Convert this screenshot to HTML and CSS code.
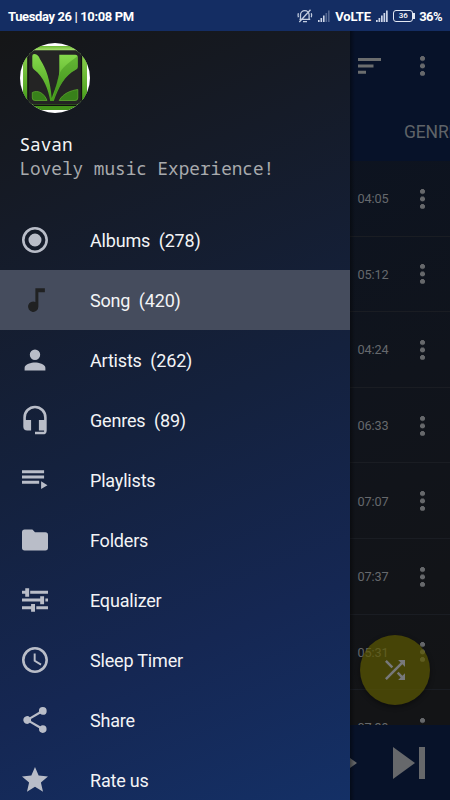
FILE: index.html
```html
<!DOCTYPE html>
<html lang="en">
<head>
<meta charset="utf-8">
<title>Savan</title>
<link rel="stylesheet" href="styles.css">
</head>
<body>
<header class="status">
  <span class="clock">Tuesday 26 | 10:08 PM</span>
  <div class="indicators">
    <svg class="bell" width="16" height="14" viewBox="0 0 16 14" fill="none" stroke="#c3cde0" stroke-width="1.3"><path d="M3.500 10V6a4.300 4.300 0 0 1 8.600 0v4M2.500 10.300h10.700M6 12.700h4M13.500 .8 2.300 13M1.400 4.300a6 6 0 0 0 0 4M14.300 4.300a6 6 0 0 1 0 4"/></svg>
    <svg class="signal" width="12" height="12" viewBox="0 0 12 12" fill="#ccd5e8"><path d="M0 10h1.600v2H0zM2.500 8h1.600v4H2.500zM5 5.500h1.600V12H5z"/><path opacity=".35" d="M7.500 3h1.600v9H7.500zM10 .5h1.600V12H10z"/></svg>
    <span class="volte">VoLTE</span>
    <svg class="signal2" width="12" height="12" viewBox="0 0 12 12" fill="#ccd5e8"><path d="M0 10h1.700v2H0zM2.500 8h1.700v4H2.500zM5 5.500h1.700V12H5zM7.500 3h1.700v9H7.500zM10 .5h1.700V12H10z"/></svg>
    <span class="battery">36</span>
    <span class="percent">36%</span>
  </div>
</header>
<div class="screen">
  <nav class="drawer">
    <div class="profile">
      <svg class="avatar" width="70" height="70" viewBox="0 0 70 70">
        <defs>
          <clipPath id="round"><circle cx="35" cy="35" r="35"/></clipPath>
          <linearGradient id="leaf" gradientUnits="userSpaceOnUse" x1="0" y1="11" x2="0" y2="58"><stop offset="0" stop-color="#86d94c"/><stop offset="1" stop-color="#459c1b"/></linearGradient>
          <linearGradient id="top" x1="0" y1="0" x2="0" y2="1"><stop offset="0" stop-color="#6db834"/><stop offset="1" stop-color="#b1e878"/></linearGradient>
          <linearGradient id="side" x1="0" y1="0" x2="0" y2="1"><stop offset="0" stop-color="#91d352"/><stop offset="1" stop-color="#449b18"/></linearGradient>
        </defs>
        <g clip-path="url(#round)">
          <path fill="#fff" d="M0 0h70v70H0z"/>
          <path fill="#43921a" d="M3 3h64v64H3z"/>
          <path fill="url(#top)" d="M3 3h64v5H3z"/>
          <path fill="url(#side)" d="M3 8h5v52H3zM62 8h5v52h-5z"/>
          <rect x="7.500" y="7.300" width="54.300" height="54.300" rx="6" fill="#242424"/>
          <path d="M8 12v46M61.500 12v46M13 62.300h44" stroke="#111" stroke-width="1.300"/>
          <path fill="url(#leaf)" d="M12.300 13q0-2 2-2c4 0 5 4 6.500 6.500C26 26 30 36 31.700 55c1.500-5 5-12 6.500-20 .8-3 1.100-5 1.100-8V11.700h16q2.500 0 2.500 2.500V24q0 2-2.500 3C45 32 38 45 33.800 58h-3.600C28.500 47 24 34 14 26.500q-1.700-1.300-1.700-3.500z"/>
          <path fill="#2d7b10" opacity=".35" d="M57.800 13v11q0 2-2.500 3C45 32 38 45 33.500 56c2-10 3.500-23 8-29 6-7 10-9 16.300-14z"/>
          <path fill="#38811a" stroke="#5aa72c" stroke-width=".8" d="M12.300 49.500c6-3 12 1 14.700 8H15q-2.700 0-2.700-2.500zM57.800 46.500c-7 1-15 4-18.600 11H55q2.800 0 2.800-2.500z"/>
        </g>
      </svg>
      <div class="name">Savan</div>
      <div class="tagline">Lovely music Experience!</div>
    </div>
    <ul class="menu">
      <li><svg viewBox="0 0 24 24"><path d="M12 7a5 5 0 1 0 0 10 5 5 0 0 0 0-10zm0-5C6.480 2 2 6.480 2 12s4.480 10 10 10 10-4.480 10-10S17.520 2 12 2zm0 18a8 8 0 1 1 0-16 8 8 0 0 1 0 16z"/></svg><span>Albums&nbsp; (278)</span></li>
      <li class="active"><svg viewBox="0 0 24 24"><path d="M12.300 3v10.550A4 4 0 1 0 14.600 17V6h5V3z"/></svg><span>Song&nbsp; (420)</span></li>
      <li><svg viewBox="0 0 24 24"><path d="M12 12a4 4 0 1 0 0-8 4 4 0 0 0 0 8zm0 2c-2.670 0-8 1.340-8 4v2h16v-2c0-2.660-5.330-4-8-4z"/></svg><span>Artists&nbsp; (262)</span></li>
      <li><svg viewBox="0 0 24 24"><path d="M12 1a9 9 0 0 0-9 9v7a3 3 0 0 0 3 3h3v-8H5v-2a7 7 0 0 1 14 0v2h-4v8h4v1h-7v2h6a3 3 0 0 0 3-3V10a9 9 0 0 0-9-9z"/></svg><span>Genres&nbsp; (89)</span></li>
      <li><svg viewBox="0 0 24 24"><path d="M2 4.500h17v2.300H2zM2 8.600h17v2.300H2zM2 12.600h13.200v2.300H2zM16.700 13v6l4.900-3z"/></svg><span>Playlists</span></li>
      <li><svg viewBox="0 0 24 24"><path d="M10 4H4a2 2 0 0 0-1.990 2L2 18a2 2 0 0 0 2 2h16a2 2 0 0 0 2-2V8a2 2 0 0 0-2-2h-8z"/></svg><span>Folders</span></li>
      <li><svg viewBox="0 0 24 24"><path d="M2 4.900h2.500V3h3v6.500h-3V7.200H2zM8.300 4.900H22v2.300H8.300zM2 10.900h14V9.100h3v6.200h-3v-2.100H2zM20 10.900h2v2.300h-2zM2 16.900h7V15h3v6H9v-1.900H2zM13 16.900h9v2.200h-9z"/></svg><span>Equalizer</span></li>
      <li><svg viewBox="0 0 24 24"><path d="M11.990 2C6.470 2 2 6.480 2 12s4.470 10 9.990 10C17.520 22 22 17.520 22 12S17.520 2 11.990 2zM12 20a8 8 0 1 1 0-16 8 8 0 0 1 0 16zM12.500 7H11v6l5.250 3.150.75-1.230-4.500-2.670z"/></svg><span>Sleep Timer</span></li>
      <li><svg viewBox="0 0 24 24"><path d="M18 16.080c-.76 0-1.440.3-1.960.77L8.910 12.700c.05-.23.09-.46.09-.7s-.04-.47-.09-.7l7.050-4.110c.54.5 1.250.81 2.040.81a3 3 0 1 0-3-3c0 .24.04.47.09.7L8.040 9.810A3 3 0 1 0 6 15c.79 0 1.500-.31 2.040-.81l7.120 4.160c-.05.21-.08.43-.08.65A2.920 2.920 0 1 0 18 16.080z"/></svg><span>Share</span></li>
      <li><svg viewBox="0 0 24 24"><path d="M12 17.270 18.180 21l-1.640-7.030L22 9.240l-7.190-.61L12 2 9.190 8.630 2 9.240l5.460 4.730L5.820 21z"/></svg><span>Rate us</span></li>
    </ul>
  </nav>
  <main class="library">
    <div class="toolbar">
      <div class="actions">
        <svg width="23" height="16" viewBox="0 0 23 16" fill="#6b6d6e"><path d="M0 0h23v3H0zM0 6.500h15.500v3H0zM0 12.800h8v3H0z"/></svg>
        <i class="more"></i>
      </div>
      <div class="tab">GENRES</div>
    </div>
    <div class="tracks">
      <div class="track"><span>04:05</span><i class="more"></i></div>
      <div class="track"><span>05:12</span><i class="more"></i></div>
      <div class="track"><span>04:24</span><i class="more"></i></div>
      <div class="track"><span>06:33</span><i class="more"></i></div>
      <div class="track"><span>07:07</span><i class="more"></i></div>
      <div class="track"><span>07:37</span><i class="more"></i></div>
      <div class="track"><span>05:31</span><i class="more"></i></div>
      <div class="track"><span>07:39</span><i class="more"></i></div>
    </div>
    <div class="player">
      <svg width="7" height="12" viewBox="0 0 7 12"><path d="M0 1v10l7-5z"/></svg>
      <svg width="32" height="32" viewBox="0 0 32 32"><path d="M0 0v32l22-16zM26 0h6v32h-6z"/></svg>
    </div>
    <div class="fab"><svg width="30" height="30" viewBox="0 0 24 24"><path d="M10.590 9.170 5.410 4 4 5.410l5.170 5.170zM14.500 4l2.040 2.040L4 18.590 5.410 20 17.960 7.460 20 9.500V4zm.33 9.410-1.410 1.410 3.130 3.130L14.500 20H20v-5.500l-2.040 2.040z"/></svg></div>
  </main>
</div>
</body>
</html>
```

FILE: styles.css
```css
* { box-sizing: border-box; }
body {
  margin: 0;
  width: 450px;
  height: 800px;
  overflow: hidden;
  display: flex;
  flex-direction: column;
  font-family: Roboto, "Liberation Sans", sans-serif;
  background: #0e131d;
}
.status {
  height: 31px;
  flex: none;
  display: flex;
  justify-content: space-between;
  align-items: center;
  padding: 1px 8px 0;
  background: #142d63;
  color: #fff;
  font-size: 13px;
  font-weight: 700;
}
.clock { letter-spacing: -.38px; }
.indicators { display: flex; align-items: center; }
.bell { margin-right: 5px; }
.signal { margin-right: 5px; }
.signal2 { margin: 0 5px 0 5px; }
.volte { width: 36px; letter-spacing: -.2px; }
.battery {
  position: relative;
  width: 20px;
  height: 12px;
  margin-right: 6px;
  border: 1.500px solid #e2e8f2;
  border-radius: 3px;
  font-size: 8px;
  font-weight: 500;
  line-height: 10px;
  text-align: center;
}
.battery::after {
  content: "";
  position: absolute;
  right: -3px;
  top: 2px;
  width: 2px;
  height: 6px;
  background: #e2e8f2;
}
.percent { letter-spacing: -.6px; }

.screen { flex: 1; min-height: 0; display: flex; }
.drawer {
  width: 350px;
  flex: none;
  overflow: hidden;
  background: linear-gradient(157deg, #151617 0%, #151b28 22%, #14213d 50%, #152753 76%, #143066 100%);
}
.profile { height: 179px; padding: 12px 20px 0 19.500px; font-family: "Noto Sans Mono", "DejaVu Sans Mono", monospace; font-size: 17.700px; line-height: 24px; }
.avatar { display: block; margin: 0 0 19px .5px; }
.name { color: #f5f6f6; }
.tagline { color: #a8aaad; white-space: nowrap; }
.menu { list-style: none; margin: 0; padding: 0; }
.menu li { height: 60px; display: flex; align-items: center; padding-left: 19.400px; color: #f3f4f6; font-size: 18px; letter-spacing: -.18px; }
.menu svg { width: 31.200px; height: 31.200px; margin-right: 39.400px; fill: #b9bdc8; transform: translate(.4px, .4px); }
.menu span { padding-top: 1px; white-space: pre; }
.menu .active { background: #454c5d; }
.menu .active svg { fill: #202122; }

.library { position: relative; width: 100px; display: flex; flex-direction: column; overflow: hidden; background: linear-gradient(160deg, #0b1322, #10141c 45%, #131416 85%); }
.library::before { content: ""; position: absolute; z-index: 2; inset: 0 auto 0 0; width: 5px; background: linear-gradient(90deg, rgba(0,0,0,.4), transparent); }
.toolbar { height: 130px; flex: none; background: #071229; }
.actions { display: flex; align-items: center; justify-content: space-between; padding: 25px 25px 0 8px; }
.more { width: 5px; height: 20px; background: radial-gradient(circle at 2.500px 2.500px, #66686b 2.200px, transparent 2.800px) 0 0 / 5px 7.500px; }
.tab { padding: 45px 0 0 54px; color: #5f6368; font-size: 17.500px; line-height: 23px; letter-spacing: -.15px; }
.tracks { flex: 1; min-height: 0; overflow: hidden; }
.track { height: 75.600px; display: flex; align-items: center; justify-content: space-between; padding: 1px 25px 0 7.500px; border-bottom: 1px solid #1a1d23; color: #66696d; font-size: 12.700px; letter-spacing: -.1px; }
.player { height: 75px; flex: none; display: flex; align-items: center; justify-content: space-between; padding-right: 25px; background: #071229; fill: #66686b; }
.fab { position: absolute; left: 10px; top: 604px; width: 70px; height: 70px; border-radius: 50%; display: flex; align-items: center; justify-content: center; background: rgba(92,88,2,.7); box-shadow: 0 2px 5px rgba(0,0,0,.4); fill: #77787a; }
```
